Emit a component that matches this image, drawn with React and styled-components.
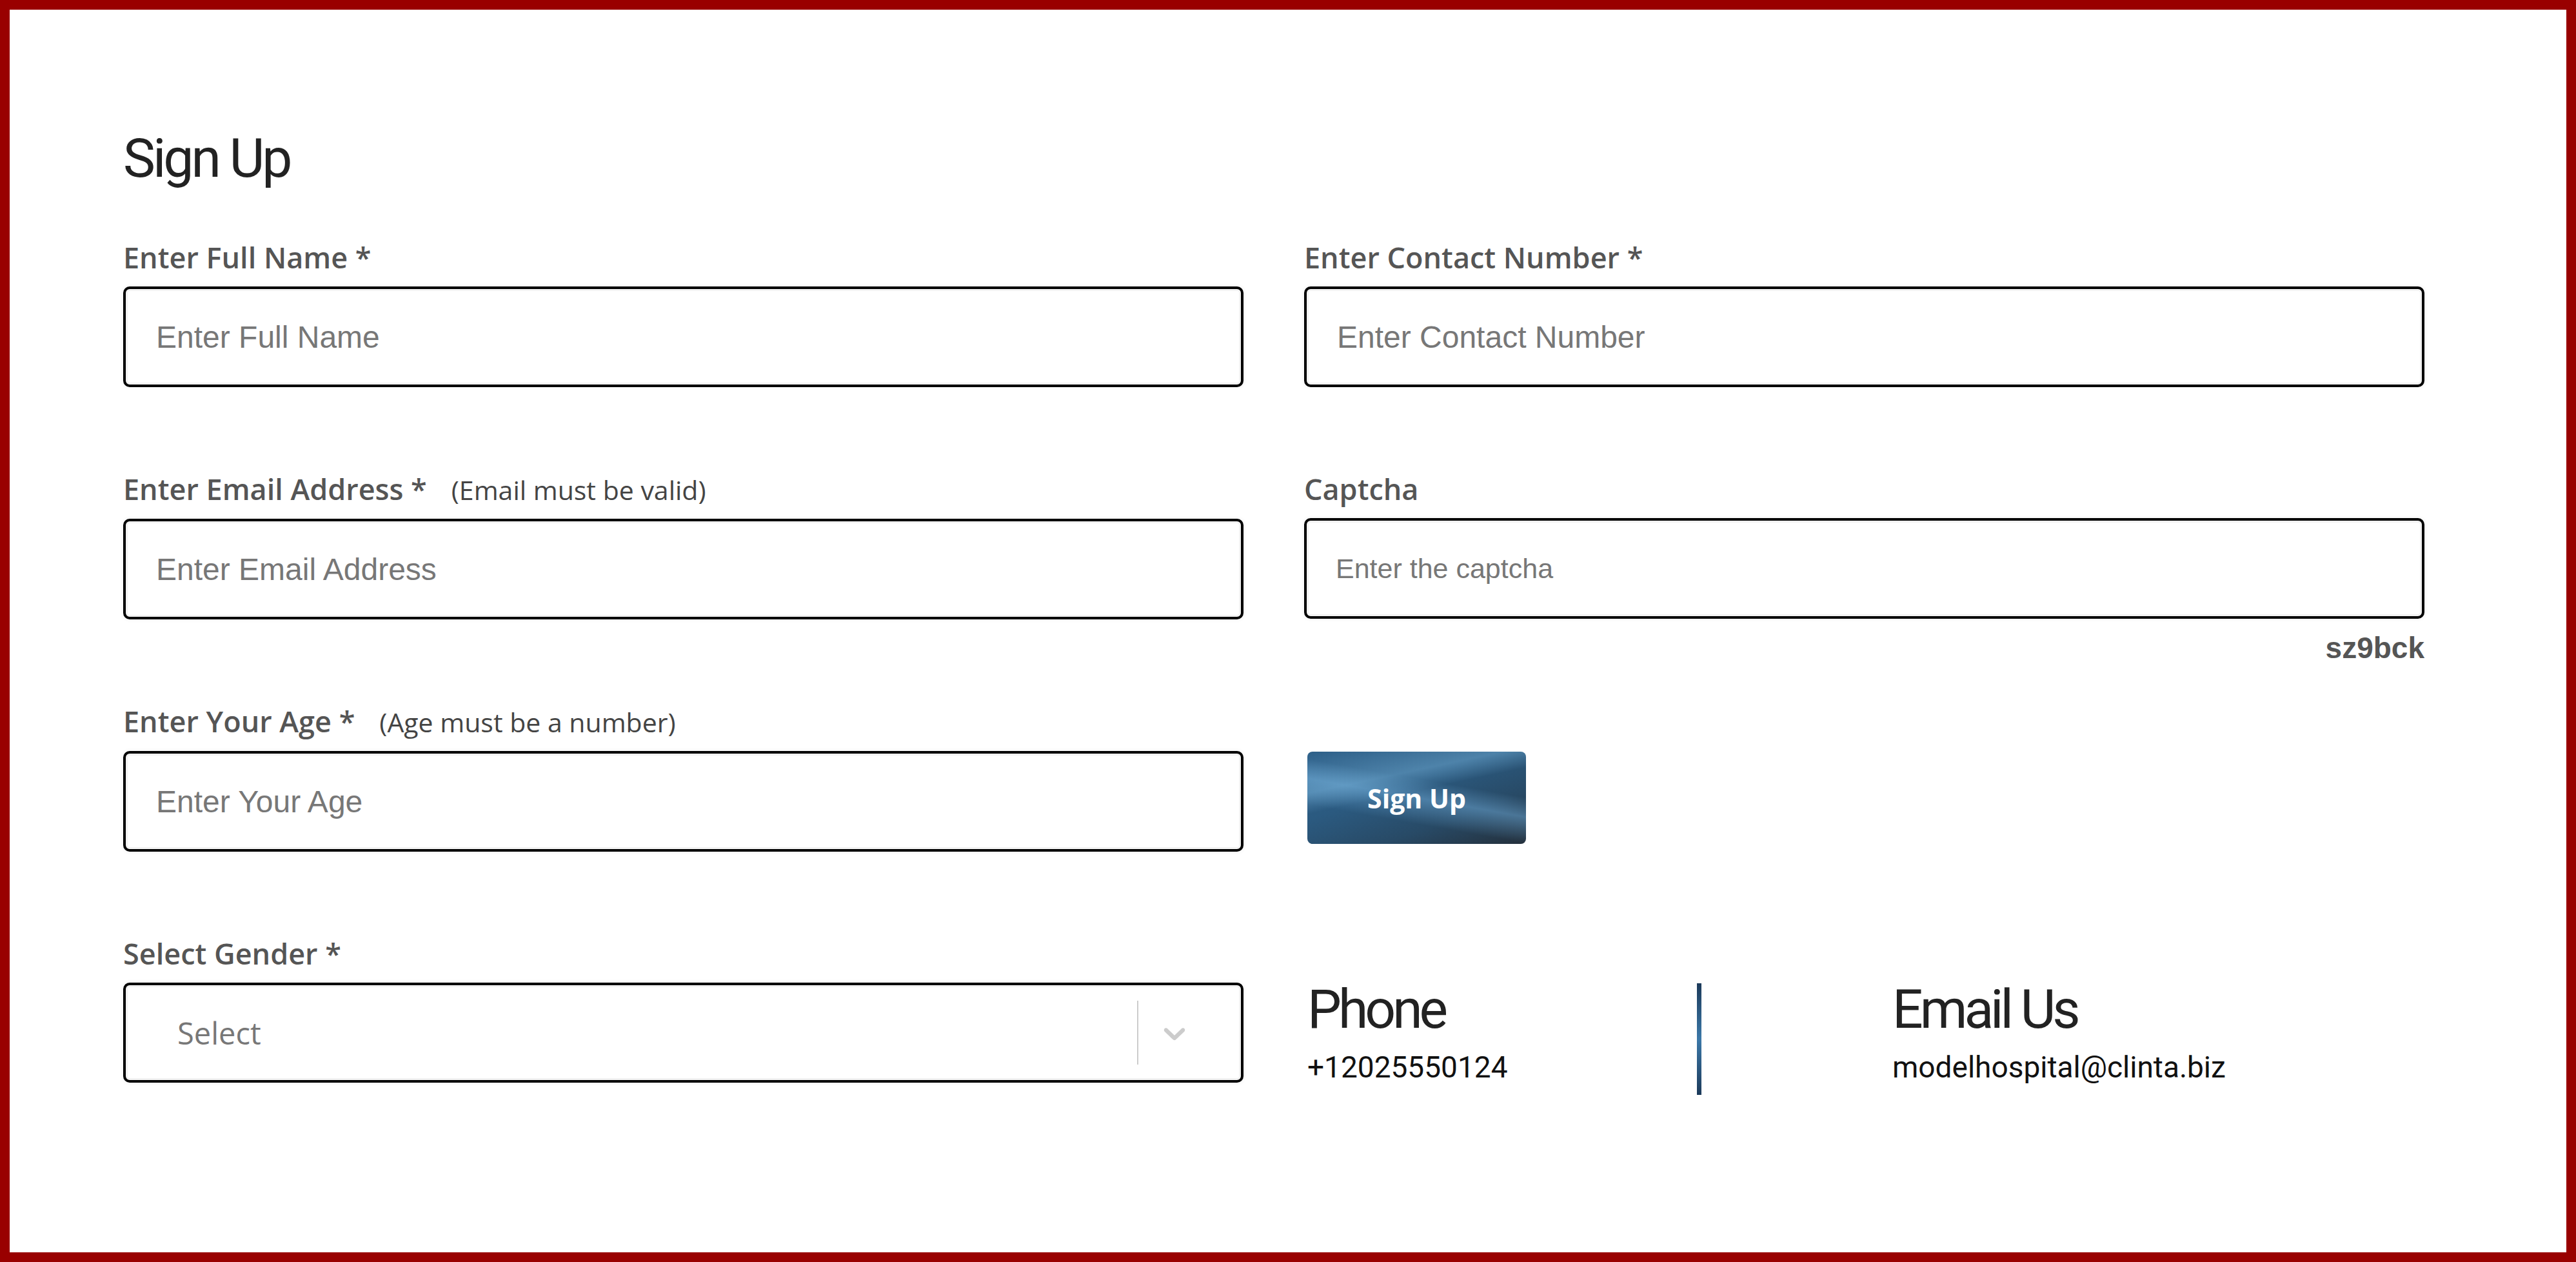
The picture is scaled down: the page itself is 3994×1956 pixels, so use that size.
import React from "react";
import styled, { createGlobalStyle } from "styled-components";

const GlobalStyle = createGlobalStyle`
  html, body {
    margin: 0;
    padding: 0;
    background: #ffffff;
  }
  body {
    font-family: "Open Sans", "Liberation Sans", sans-serif;
  }
  * {
    box-sizing: border-box;
  }
`;

const Frame = styled.div`
  min-height: 1956px;
  border: 15px solid #990000;
  background: #ffffff;
  padding: 189px 220px 0 176px;
`;

const Title = styled.h1`
  margin: 0 0 84px;
  font-family: "Roboto", sans-serif;
  font-weight: 400;
  font-size: 84px;
  letter-spacing: -4px;
  line-height: 1;
  color: #222;
`;

const FormGrid = styled.div`
  display: grid;
  grid-template-columns: 1fr 1fr;
  column-gap: 94px;
  align-items: start;
`;

const Column = styled.div`
  display: flex;
  flex-direction: column;
  gap: 131px;
`;

const Field = styled.div`
  display: flex;
  flex-direction: column;
  gap: 18px;
`;

const Label = styled.label`
  display: flex;
  align-items: baseline;
  font-size: 45px;
  line-height: 54px;
  font-weight: 600;
  color: #555;
`;

const Note = styled.span`
  margin-left: 38px;
  font-size: 41px;
  font-weight: 400;
  color: #444;
`;

const Input = styled.input`
  width: 100%;
  height: 156px;
  padding: 0 0 0 ${(p) => (p.$small ? 45 : 47)}px;
  border: 4px solid #000;
  border-radius: 10px;
  background: #fff;
  font-family: "Liberation Sans", Arial, sans-serif;
  font-size: ${(p) => (p.$small ? 43 : 48)}px;
  color: #222;
  outline: none;
  box-shadow: 0 0 6px rgba(0, 0, 0, 0.08), inset 0 0 0 3px #f2f2f2;

  &::placeholder {
    color: #777;
  }
`;

const CaptchaCode = styled.div`
  text-align: right;
  font-family: "Liberation Sans", Arial, sans-serif;
  font-weight: 700;
  font-size: 46px;
  line-height: 54px;
  color: #555;
`;

const SelectControl = styled.div`
  display: flex;
  align-items: stretch;
  height: 155px;
  border: 4px solid #000;
  border-radius: 10px;
  background: #fff;
  box-shadow: 0 0 6px rgba(0, 0, 0, 0.08), inset 0 0 0 3px #f2f2f2;
`;

const SelectValue = styled.div`
  flex: 1;
  display: flex;
  align-items: center;
  padding-left: 80px;
  font-size: 47px;
  color: #777;
`;

const SelectSeparator = styled.span`
  width: 2px;
  margin: 24px 0;
  background: #cccccc;
`;

const SelectIndicator = styled.div`
  display: flex;
  align-items: center;
  padding: 0 75px 0 28px;
  color: #cccccc;
`;

const SubmitButton = styled.button`
  align-self: flex-start;
  width: 339px;
  height: 143px;
  margin: 3px 0 0 5px;
  border: none;
  border-radius: 8px;
  background:
    linear-gradient(168deg, rgba(0, 0, 0, 0) 0%, rgba(120, 180, 220, 0.45) 30%, rgba(0, 0, 0, 0) 45%),
    linear-gradient(10deg, rgba(0, 0, 0, 0) 30%, rgba(110, 170, 215, 0.5) 50%, rgba(0, 0, 0, 0) 65%),
    linear-gradient(160deg, #2d5f88 0%, #2b5a80 40%, #284a66 70%, #24303c 100%);
  color: #fff;
  font-family: "Open Sans", sans-serif;
  font-weight: 700;
  font-size: 41px;
  cursor: pointer;
`;

const ContactRow = styled.div`
  display: flex;
  align-items: stretch;
  margin-top: 84px;
  padding-left: 5px;
`;

const ContactBlock = styled.div`
  width: ${(p) => p.$width}px;
  display: flex;
  flex-direction: column;
`;

const ContactTitle = styled.h2`
  margin: 0 0 20px;
  font-family: "Roboto", sans-serif;
  font-weight: 400;
  font-size: 84px;
  letter-spacing: -5px;
  line-height: 1;
  color: #222;
`;

const ContactText = styled.div`
  font-family: "Roboto", sans-serif;
  font-size: 46px;
  line-height: 1.2;
  color: #111;
`;

const Divider = styled.span`
  width: 7px;
  height: 173px;
  margin: 1px 296px 0 0;
  background: linear-gradient(to bottom, #1c3a5a, #3b78a8 50%, #1c3a5a);
`;

const Chevron = () => (
  <svg width="56" height="56" viewBox="0 0 20 20" fill="currentColor">
    <path d="M4.516 7.548c0.436-0.446 1.043-0.481 1.576 0l3.908 3.747 3.908-3.747c0.533-0.481 1.141-0.446 1.574 0 0.436 0.445 0.408 1.197 0 1.615-0.406 0.418-4.695 4.502-4.695 4.502-0.217 0.223-0.502 0.335-0.787 0.335s-0.57-0.112-0.789-0.335c0 0-4.287-4.084-4.695-4.502s-0.436-1.170 0-1.615z" />
  </svg>
);

export default function App() {
  return (
    <>
      <GlobalStyle />
      <Frame>
        <Title>Sign Up</Title>
        <FormGrid>
          <Column>
            <Field>
              <Label>Enter Full Name *</Label>
              <Input placeholder="Enter Full Name" />
            </Field>
            <Field>
              <Label>
                Enter Email Address *<Note>(Email must be valid)</Note>
              </Label>
              <Input placeholder="Enter Email Address" />
            </Field>
            <Field>
              <Label>
                Enter Your Age *<Note>(Age must be a number)</Note>
              </Label>
              <Input placeholder="Enter Your Age" />
            </Field>
            <Field>
              <Label>Select Gender *</Label>
              <SelectControl>
                <SelectValue>Select</SelectValue>
                <SelectSeparator />
                <SelectIndicator>
                  <Chevron />
                </SelectIndicator>
              </SelectControl>
            </Field>
          </Column>

          <Column>
            <Field>
              <Label>Enter Contact Number *</Label>
              <Input placeholder="Enter Contact Number" />
            </Field>
            <Field>
              <Label>Captcha</Label>
              <Input $small placeholder="Enter the captcha" />
              <CaptchaCode>sz9bck</CaptchaCode>
            </Field>
            <SubmitButton>Sign Up</SubmitButton>
            <ContactRow>
              <ContactBlock $width={604}>
                <ContactTitle>Phone</ContactTitle>
                <ContactText>+12025550124</ContactText>
              </ContactBlock>
              <Divider />
              <ContactBlock $width={700}>
                <ContactTitle>Email Us</ContactTitle>
                <ContactText>modelhospital@clinta.biz</ContactText>
              </ContactBlock>
            </ContactRow>
          </Column>
        </FormGrid>
      </Frame>
    </>
  );
}
